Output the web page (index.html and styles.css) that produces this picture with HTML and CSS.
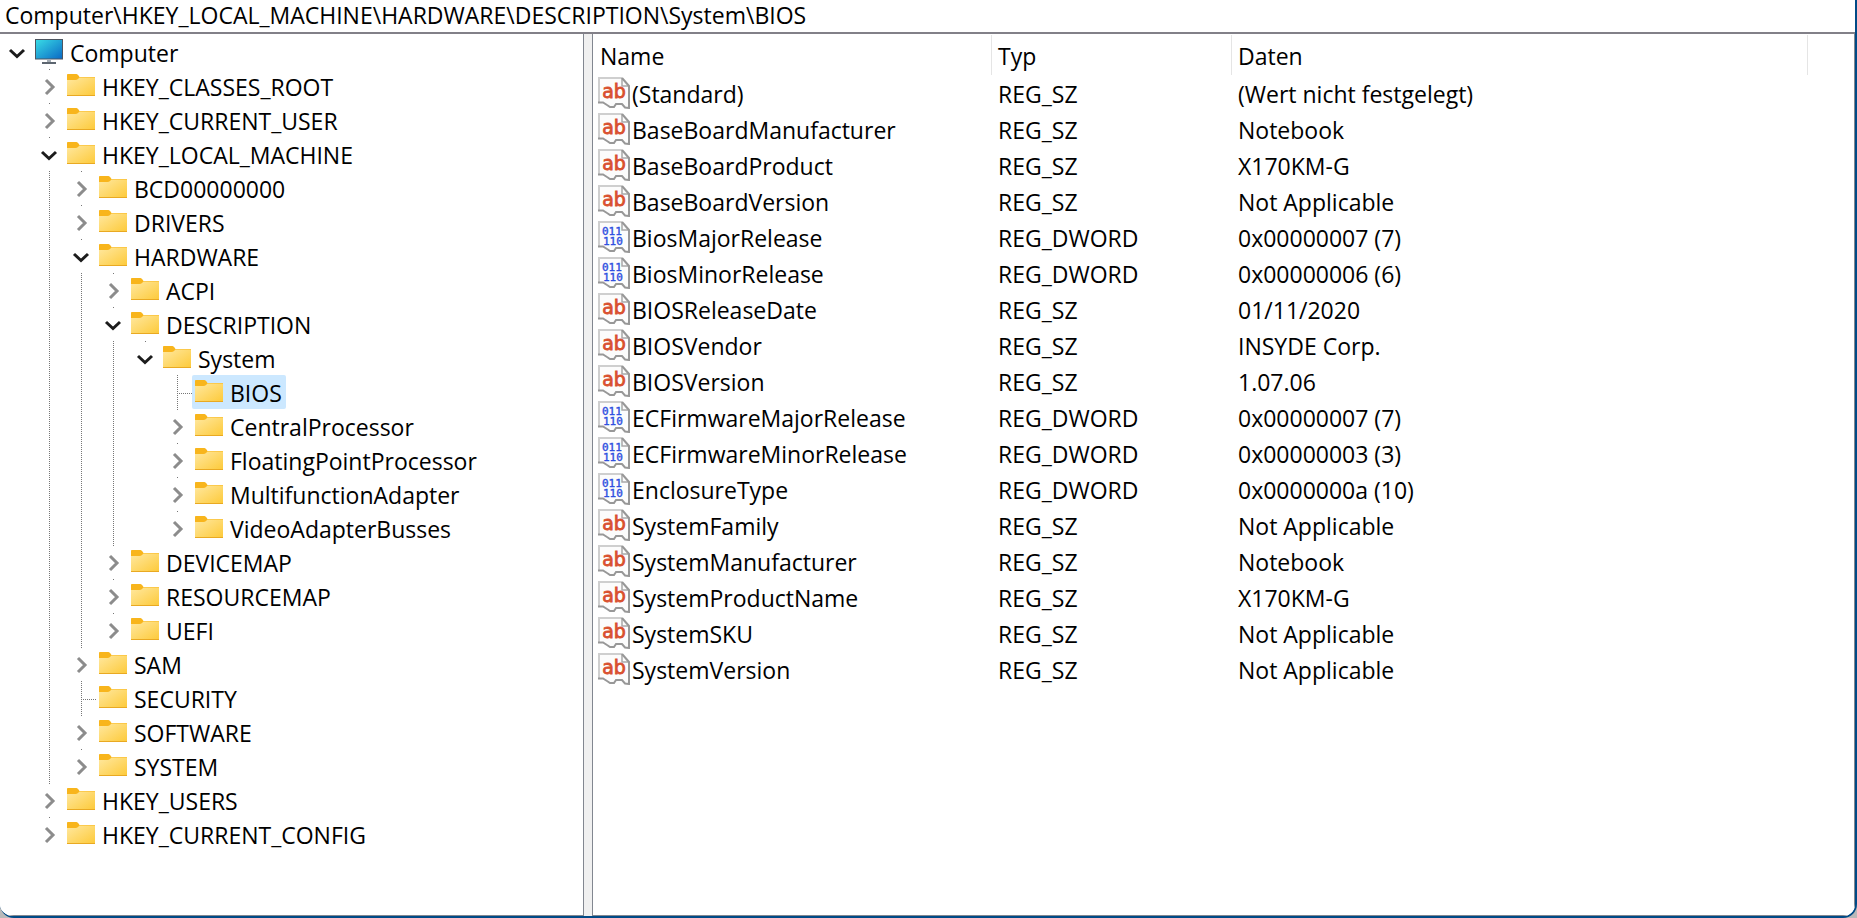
FILE: index.html
```
<!DOCTYPE html>
<html lang="de">
<head>
<meta charset="utf-8">
<title>Registrierungs-Editor</title>
<link rel="stylesheet" href="styles.css">
</head>
<body>
<svg class="defs" aria-hidden="true">
  <defs>
    <linearGradient id="g-folder" x1="0" y1="0" x2="1" y2="1">
      <stop offset="0" stop-color="#ffe8a0"/>
      <stop offset="1" stop-color="#fdca3a"/>
    </linearGradient>
    <linearGradient id="g-screen" x1="0" y1="0" x2="1" y2="1">
      <stop offset="0" stop-color="#39dde6"/>
      <stop offset="1" stop-color="#0a68c4"/>
    </linearGradient>
    <symbol id="i-closed" viewBox="0 0 32 34">
      <path d="M14 11L21 18L14 25" fill="none" stroke="#8c8c8c" stroke-width="3"/>
    </symbol>
    <symbol id="i-open" viewBox="0 0 32 34">
      <path d="M10 15L17 21.500L24 15" fill="none" stroke="#1c1c1c" stroke-width="3"/>
    </symbol>
    <symbol id="i-folder" viewBox="0 0 28 24">
      <path d="M0 1.500Q0 1 1 1H9.500Q10.500 1 11.500 2.500L12.500 4H28V8H0Z" fill="#f8b51c"/>
      <path d="M0 7H8.500Q10 7 11 6L12.500 4.500H28V22.500H0Z" fill="url(#g-folder)"/>
      <path d="M0 22.500H28" stroke="#e9a922" stroke-width="1"/>
    </symbol>
    <symbol id="i-monitor" viewBox="0 0 28 28">
      <rect x="0.500" y="2.500" width="27" height="19.500" fill="url(#g-screen)" stroke="#4d5560"/>
      <path d="M12 22.500H16V25H12Z" fill="#a5adb5"/>
      <path d="M7 25H21V27H7Z" fill="#5d6670"/>
    </symbol>
    <symbol id="i-page" viewBox="0 0 32 32">
      <path d="M1 25V1H24L31 9V31L26 30L24 27H18L16 30H12L5 26Z" fill="#fcfcfc"/>
      <path d="M1 25V1H24" fill="none" stroke="#cfcfcf" stroke-width="2"/>
      <path d="M24 1V9H31" fill="none" stroke="#a8a8a8" stroke-width="1.500"/>
      <path d="M24 1L31 9V31L27 30.500L24 27H18L16 30H12L9 28L5 25.500H0" fill="none" stroke="#989898" stroke-width="2"/>
    </symbol>
    <symbol id="i-string" viewBox="0 0 32 32">
      <use href="#i-page"/>
      <text class="glyph-ab" x="16" y="21" text-anchor="middle">ab</text>
    </symbol>
    <symbol id="i-dword" viewBox="0 0 32 32">
      <use href="#i-page"/>
      <text class="glyph-bits" x="4" y="14">011</text>
      <text class="glyph-bits" x="5" y="24">110</text>
    </symbol>
  </defs>
</svg>
<main class="window">
  <input class="address" type="text" aria-label="Adresse" value="Computer\HKEY_LOCAL_MACHINE\HARDWARE\DESCRIPTION\System\BIOS">
  <div class="panes">
    <nav class="tree-pane" aria-label="Schlüssel">
      <ul class="tree" id="tree"></ul>
    </nav>
    <section class="list-pane" aria-label="Werte">
      <table class="values">
        <colgroup><col class="c-name"><col class="c-type"><col class="c-data"><col></colgroup>
        <thead><tr><th>Name</th><th>Typ</th><th>Daten</th><td></td></tr></thead>
        <tbody id="values"></tbody>
      </table>
    </section>
  </div>
</main>
<script src="app.js"></script>
</body>
</html>
```
FILE: styles.css
```
* { box-sizing: border-box; }
body {
  margin: 0;
  background: #b9b9b9;
  color: #000;
  font: 23px/30px "Open Sans", "Noto Sans", sans-serif;
}
.defs { position: absolute; width: 0; height: 0; }
.window {
  display: flex;
  flex-direction: column;
  min-height: 100vh;
  background: #fff;
  border: solid #004a86;
  border-width: 0 2px 2px 0;
  border-radius: 0 0 14px 14px;
  overflow: hidden;
}
.address {
  width: 100%;
  height: 34px;
  padding: 0 5px 2px;
  border: 0;
  border-bottom: 2px solid #828088;
  background: #fff;
  color: inherit;
  font: inherit;
  outline: none;
}
.panes { flex: 1; display: flex; gap: 8px; background: #f0f0f0; }
.tree-pane, .list-pane {
  background: #fff;
  border: solid #828790;
  border-width: 0 1px 1px 0;
}
.tree-pane { flex: none; width: 584px; padding-top: 1px; }
.list-pane { flex: 1; min-width: 0; border-left-width: 1px; }

.tree, .tree ul { margin: 0; padding: 0; list-style: none; }
.tree ul { padding-left: 32px; }
.tree li:not(:last-child) > ul {
  background: repeating-linear-gradient(#767676 0 1px, transparent 1px 2px) 17px 0 / 1px 100% no-repeat;
}
.row { display: flex; height: 34px; }
.tree button { border: 0; background: none; padding: 0; color: inherit; font: inherit; }
.tree .expander, .connector { flex: none; width: 32px; height: 34px; }
.expander svg { display: block; width: 32px; height: 34px; }
.tree ul .expander { background: linear-gradient(#767676, #767676) 17px 0 / 1px 1px no-repeat; }
.connector {
  background:
    repeating-linear-gradient(#767676 0 1px, transparent 1px 2px) 17px 0 / 1px 100% no-repeat,
    repeating-linear-gradient(90deg, #767676 0 1px, transparent 1px 2px) 17px 18px / 15px 1px no-repeat;
}
.tree .label {
  display: flex;
  align-items: center;
  gap: 7px;
  padding: 1px 4px 0 3px;
  border-radius: 2px;
  white-space: nowrap;
}
.tree .label.selected { background: #cce8ff; }
.folder { width: 28px; height: 24px; margin-bottom: 3px; }
.monitor { width: 28px; height: 28px; margin-bottom: 3px; }

.values { width: 100%; border-collapse: collapse; table-layout: fixed; }
.c-name { width: 399px; }
.c-type { width: 240px; }
.c-data { width: 576px; }
.values th, .values td { padding: 0 6px; text-align: left; font-weight: 400; white-space: nowrap; }
.values thead th {
  height: 42px;
  padding-top: 1px;
  background: linear-gradient(#e5e5e5, #e5e5e5) right 1px / 1px 40px no-repeat;
}
.values thead th:first-child { padding-left: 7px; }
.values tbody td { height: 36px; }
.values tbody td:first-child { padding-left: 5px; }
.value-name { display: flex; align-items: center; gap: 2px; }
.value-name svg { width: 32px; height: 32px; margin-bottom: 2px; }
.glyph-ab { font: 400 19px "DejaVu Sans", sans-serif; fill: #d9502e; stroke: #d9502e; stroke-width: 0.8px; }
.glyph-bits { font: 400 11px "DejaVu Sans Mono", monospace; fill: #2f50e0; stroke: #2f50e0; stroke-width: 0.4px; }
```
FILE: app.js
```
const keys = {
  name: "Computer", icon: "monitor", children: [
    { name: "HKEY_CLASSES_ROOT" },
    { name: "HKEY_CURRENT_USER" },
    { name: "HKEY_LOCAL_MACHINE", children: [
      { name: "BCD00000000" },
      { name: "DRIVERS" },
      { name: "HARDWARE", children: [
        { name: "ACPI" },
        { name: "DESCRIPTION", children: [
          { name: "System", children: [
            { name: "BIOS", leaf: true, selected: true },
            { name: "CentralProcessor" },
            { name: "FloatingPointProcessor" },
            { name: "MultifunctionAdapter" },
            { name: "VideoAdapterBusses" }
          ] }
        ] },
        { name: "DEVICEMAP" },
        { name: "RESOURCEMAP" },
        { name: "UEFI" }
      ] },
      { name: "SAM" },
      { name: "SECURITY", leaf: true },
      { name: "SOFTWARE" },
      { name: "SYSTEM" }
    ] },
    { name: "HKEY_USERS" },
    { name: "HKEY_CURRENT_CONFIG" }
  ]
};

const values = [
  ["(Standard)", "REG_SZ", "(Wert nicht festgelegt)"],
  ["BaseBoardManufacturer", "REG_SZ", "Notebook"],
  ["BaseBoardProduct", "REG_SZ", "X170KM-G"],
  ["BaseBoardVersion", "REG_SZ", "Not Applicable"],
  ["BiosMajorRelease", "REG_DWORD", "0x00000007 (7)"],
  ["BiosMinorRelease", "REG_DWORD", "0x00000006 (6)"],
  ["BIOSReleaseDate", "REG_SZ", "01/11/2020"],
  ["BIOSVendor", "REG_SZ", "INSYDE Corp."],
  ["BIOSVersion", "REG_SZ", "1.07.06"],
  ["ECFirmwareMajorRelease", "REG_DWORD", "0x00000007 (7)"],
  ["ECFirmwareMinorRelease", "REG_DWORD", "0x00000003 (3)"],
  ["EnclosureType", "REG_DWORD", "0x0000000a (10)"],
  ["SystemFamily", "REG_SZ", "Not Applicable"],
  ["SystemManufacturer", "REG_SZ", "Notebook"],
  ["SystemProductName", "REG_SZ", "X170KM-G"],
  ["SystemSKU", "REG_SZ", "Not Applicable"],
  ["SystemVersion", "REG_SZ", "Not Applicable"]
];

function keyItem(key) {
  const icon = key.icon || "folder";
  const toggle = key.leaf
    ? '<span class="connector"></span>'
    : `<button class="expander" aria-label="${key.name} umschalten"><svg><use href="#i-${key.children ? "open" : "closed"}"/></svg></button>`;
  const branch = key.children ? `<ul>${key.children.map(keyItem).join("")}</ul>` : "";
  return `<li><div class="row">${toggle}<button class="label${key.selected ? " selected" : ""}"><svg class="${icon}"><use href="#i-${icon}"/></svg>${key.name}</button></div>${branch}</li>`;
}

document.getElementById("tree").innerHTML = keyItem(keys);
document.getElementById("values").innerHTML = values.map(([name, type, data]) =>
  `<tr><td><div class="value-name"><svg><use href="#i-${type === "REG_SZ" ? "string" : "dword"}"/></svg>${name}</div></td><td>${type}</td><td>${data}</td><td></td></tr>`
).join("");
```
